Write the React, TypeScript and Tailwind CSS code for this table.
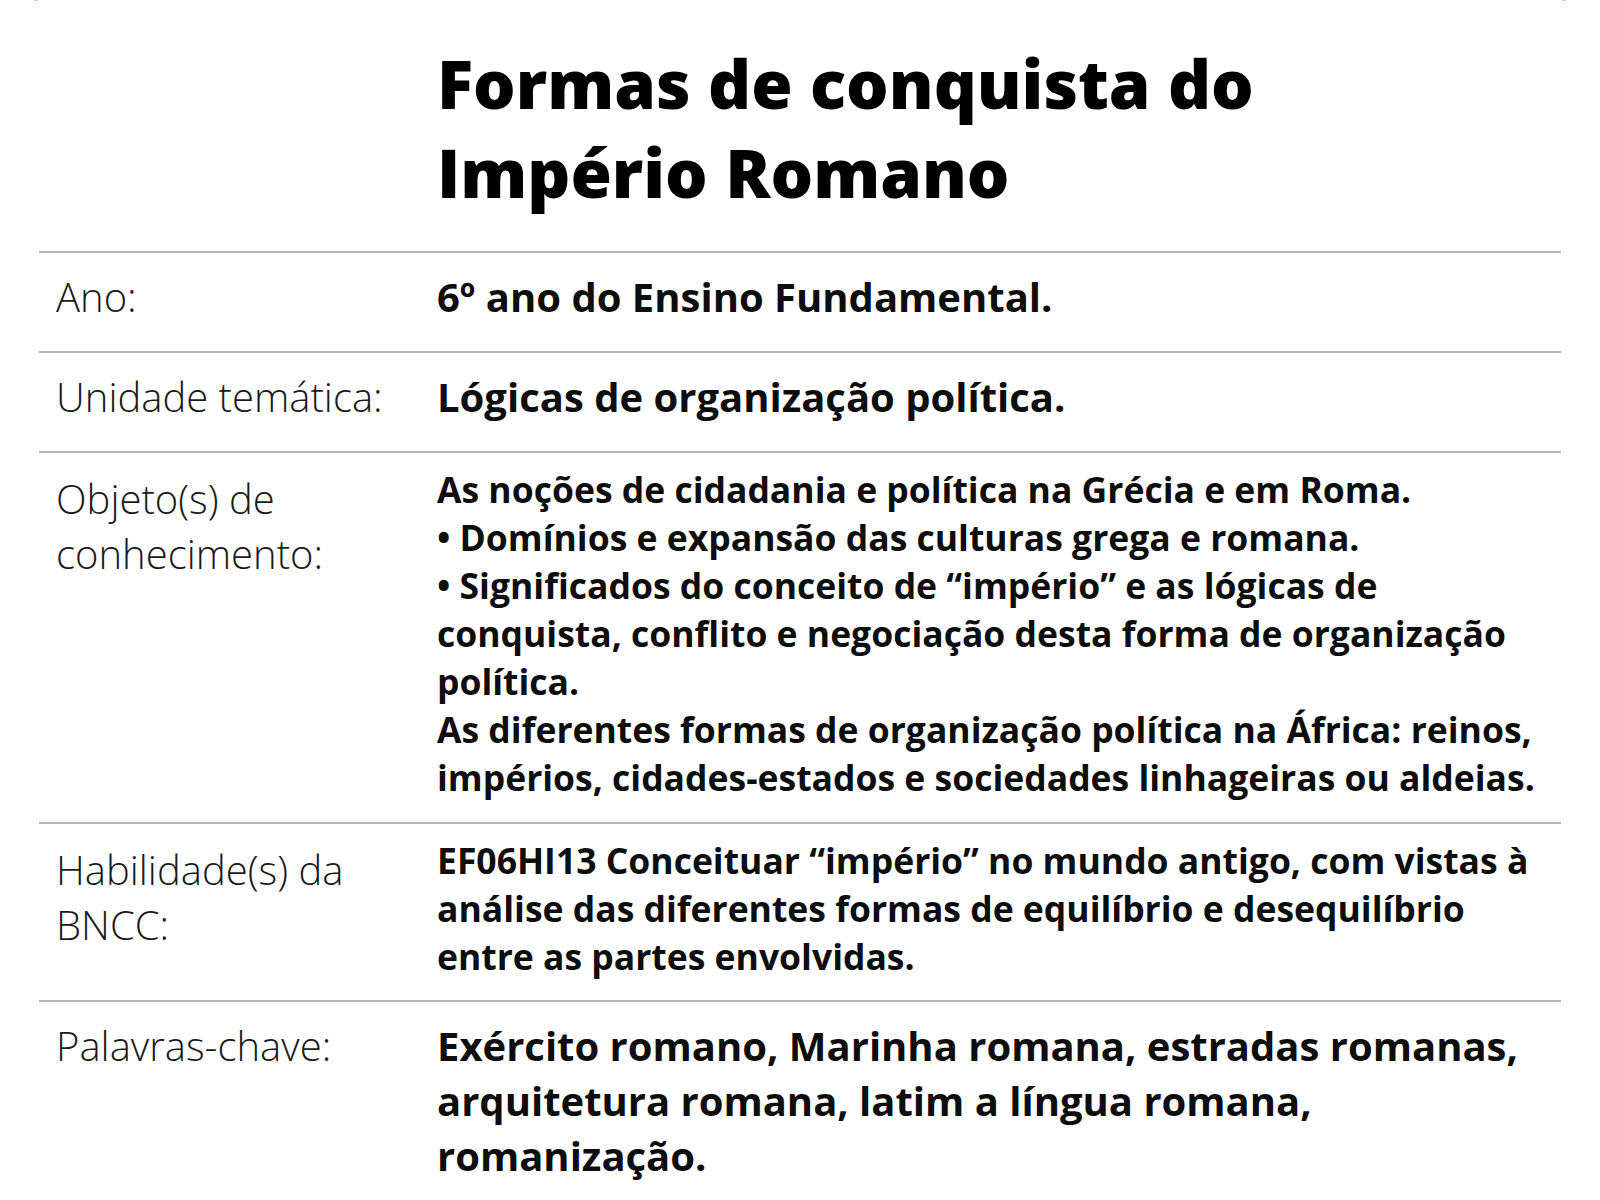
const labelCls = "w-[398px] shrink-0 pl-[17px] text-[40px] font-light leading-[55px] text-[#1a1a1a]";

function Row({
  label,
  children,
  className,
  labelClass,
}: {
  label: React.ReactNode;
  children: React.ReactNode;
  className?: string;
  labelClass?: string;
}) {
  return (
    <div className={"flex border-t-2 border-[#b5b5b5] " + (className ?? "")}>
      <div className={labelCls + " " + (labelClass ?? "")}>{label}</div>
      <div className="min-w-0 flex-1 whitespace-nowrap font-bold text-[#0d0d0d]">{children}</div>
    </div>
  );
}

export default function App() {
  return (
    <div className="min-h-[1200px] w-[1600px] overflow-hidden bg-white font-['Open_Sans',sans-serif]">
      <div className="flex h-px justify-between px-[34px]">
        <span className="h-px w-[4px] bg-[#a6e39a]" />
        <span className="h-px w-[4px] bg-[#a6e39a]" />
      </div>
      <div className="mx-[39px]">
        <h1 className="pb-[34px] pl-[398px] pt-[38px] text-[67px] font-extrabold leading-[89px] text-black">
          Formas de conquista do
          <br />
          Império Romano
        </h1>

        <Row label="Ano:" className="pb-[27px] pt-[16px]">
          <p className="text-[40px] leading-[55px]">6º ano do Ensino Fundamental.</p>
        </Row>

        <Row label="Unidade temática:" className="pb-[27px] pt-[16px]">
          <p className="text-[40px] leading-[55px]">Lógicas de organização política.</p>
        </Row>

        <Row
          label={
            <>
              Objeto(s) de
              <br />
              conhecimento:
            </>
          }
          className="pb-[21px] pt-[12px]"
          labelClass="mt-[6px]"
        >
          <div className="text-[35.5px] leading-[48px]">
            <p>As noções de cidadania e política na Grécia e em Roma.</p>
            <p>• Domínios e expansão das culturas grega e romana.</p>
            <p>
              • Significados do conceito de “império” e as lógicas de
              <br />
              conquista, conflito e negociação desta forma de organização
              <br />
              política.
            </p>
            <p>
              As diferentes formas de organização política na África: reinos,
              <br />
              impérios, cidades-estados e sociedades linhageiras ou aldeias.
            </p>
          </div>
        </Row>

        <Row
          label={
            <>
              Habilidade(s) da
              <br />
              BNCC:
            </>
          }
          className="pb-[20px] pt-[12px]"
          labelClass="mt-[6px]"
        >
          <p className="text-[35.5px] leading-[48px]">
            EF06HI13 Conceituar “império” no mundo antigo, com vistas à
            <br />
            análise das diferentes formas de equilíbrio e desequilíbrio
            <br />
            entre as partes envolvidas.
          </p>
        </Row>

        <Row label="Palavras-chave:" className="pt-[16px]">
          <p className="text-[40px] leading-[55px]">
            Exército romano, Marinha romana, estradas romanas,
            <br />
            arquitetura romana, latim a língua romana,
            <br />
            romanização.
          </p>
        </Row>
      </div>
    </div>
  );
}
